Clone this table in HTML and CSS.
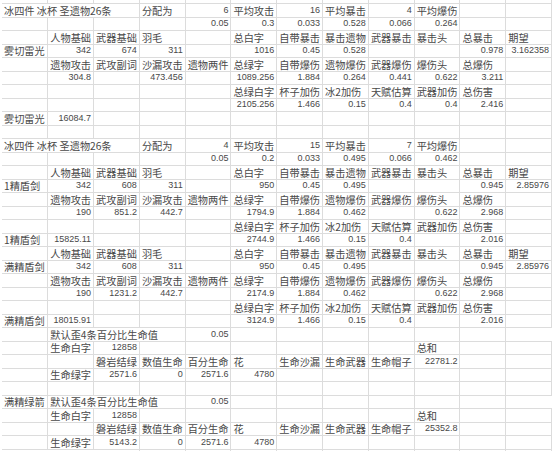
FILE: index.html
```html
<!DOCTYPE html>
<html lang="zh">
<head>
<meta charset="utf-8">
<title>sheet</title>
<link rel="stylesheet" href="styles.css">
</head>
<body>
<table class="sheet">
<colgroup><col><col><col><col><col><col><col><col><col><col><col><col></colgroup>
<tr class="stub"><td></td><td></td><td></td><td></td><td></td><td></td><td></td><td></td><td></td><td></td><td></td><td></td></tr>
<tr><td colspan="3">冰四件 冰杯 圣遗物26条</td><td>分配为</td><td class="n">6</td><td>平均攻击</td><td class="n">16</td><td>平均暴击</td><td class="n">4</td><td>平均爆伤</td><td></td><td></td></tr>
<tr><td></td><td></td><td></td><td></td><td class="n">0.05</td><td class="n">0.3</td><td class="n">0.033</td><td class="n">0.528</td><td class="n">0.066</td><td class="n">0.264</td><td></td><td></td></tr>
<tr><td></td><td>人物基础</td><td>武器基础</td><td>羽毛</td><td></td><td>总白字</td><td>自带暴击</td><td>暴击遗物</td><td>武器暴击</td><td>暴击头</td><td>总暴击</td><td>期望</td></tr>
<tr><td>雾切雷光</td><td class="n">342</td><td class="n">674</td><td class="n">311</td><td></td><td class="n">1016</td><td class="n">0.45</td><td class="n">0.528</td><td></td><td></td><td class="n">0.978</td><td class="n">3.162358</td></tr>
<tr><td></td><td>遗物攻击</td><td>武攻副词</td><td>沙漏攻击</td><td>遗物两件</td><td>总绿字</td><td>自带爆伤</td><td>遗物爆伤</td><td>武器爆伤</td><td>爆伤头</td><td>总爆伤</td><td></td></tr>
<tr><td></td><td class="n">304.8</td><td></td><td class="n">473.456</td><td></td><td class="n">1089.256</td><td class="n">1.884</td><td class="n">0.264</td><td class="n">0.441</td><td class="n">0.622</td><td class="n">3.211</td><td></td></tr>
<tr><td></td><td></td><td></td><td></td><td></td><td>总绿白字</td><td>杯子加伤</td><td>冰2加伤</td><td>天赋估算</td><td>武器加伤</td><td>总伤害</td><td></td></tr>
<tr><td></td><td></td><td></td><td></td><td></td><td class="n">2105.256</td><td class="n">1.466</td><td class="n">0.15</td><td class="n">0.4</td><td class="n">0.4</td><td class="n">2.416</td><td></td></tr>
<tr><td>雾切雷光</td><td class="n">16084.7</td><td></td><td></td><td></td><td></td><td></td><td></td><td></td><td></td><td></td><td></td></tr>
<tr><td></td><td></td><td></td><td></td><td></td><td></td><td></td><td></td><td></td><td></td><td></td><td></td></tr>
<tr><td colspan="3">冰四件 冰杯 圣遗物26条</td><td>分配为</td><td class="n">4</td><td>平均攻击</td><td class="n">15</td><td>平均暴击</td><td class="n">7</td><td>平均爆伤</td><td></td><td></td></tr>
<tr><td></td><td></td><td></td><td></td><td class="n">0.05</td><td class="n">0.2</td><td class="n">0.033</td><td class="n">0.495</td><td class="n">0.066</td><td class="n">0.462</td><td></td><td></td></tr>
<tr><td></td><td>人物基础</td><td>武器基础</td><td>羽毛</td><td></td><td>总白字</td><td>自带暴击</td><td>暴击遗物</td><td>武器暴击</td><td>暴击头</td><td>总暴击</td><td>期望</td></tr>
<tr><td>1精盾剑</td><td class="n">342</td><td class="n">608</td><td class="n">311</td><td></td><td class="n">950</td><td class="n">0.45</td><td class="n">0.495</td><td></td><td></td><td class="n">0.945</td><td class="n">2.85976</td></tr>
<tr><td></td><td>遗物攻击</td><td>武攻副词</td><td>沙漏攻击</td><td>遗物两件</td><td>总绿字</td><td>自带爆伤</td><td>遗物爆伤</td><td>武器爆伤</td><td>爆伤头</td><td>总爆伤</td><td></td></tr>
<tr><td></td><td class="n">190</td><td class="n">851.2</td><td class="n">442.7</td><td></td><td class="n">1794.9</td><td class="n">1.884</td><td class="n">0.462</td><td></td><td class="n">0.622</td><td class="n">2.968</td><td></td></tr>
<tr><td></td><td></td><td></td><td></td><td></td><td>总绿白字</td><td>杯子加伤</td><td>冰2加伤</td><td>天赋估算</td><td>武器加伤</td><td>总伤害</td><td></td></tr>
<tr><td>1精盾剑</td><td class="n">15825.11</td><td></td><td></td><td></td><td class="n">2744.9</td><td class="n">1.466</td><td class="n">0.15</td><td class="n">0.4</td><td></td><td class="n">2.016</td><td></td></tr>
<tr><td></td><td>人物基础</td><td>武器基础</td><td>羽毛</td><td></td><td>总白字</td><td>自带暴击</td><td>暴击遗物</td><td>武器暴击</td><td>暴击头</td><td>总暴击</td><td>期望</td></tr>
<tr><td>满精盾剑</td><td class="n">342</td><td class="n">608</td><td class="n">311</td><td></td><td class="n">950</td><td class="n">0.45</td><td class="n">0.495</td><td></td><td></td><td class="n">0.945</td><td class="n">2.85976</td></tr>
<tr><td></td><td>遗物攻击</td><td>武攻副词</td><td>沙漏攻击</td><td>遗物两件</td><td>总绿字</td><td>自带爆伤</td><td>遗物爆伤</td><td>武器爆伤</td><td>爆伤头</td><td>总爆伤</td><td></td></tr>
<tr><td></td><td class="n">190</td><td class="n">1231.2</td><td class="n">442.7</td><td></td><td class="n">2174.9</td><td class="n">1.884</td><td class="n">0.462</td><td></td><td class="n">0.622</td><td class="n">2.968</td><td></td></tr>
<tr><td></td><td></td><td></td><td></td><td></td><td>总绿白字</td><td>杯子加伤</td><td>冰2加伤</td><td>天赋估算</td><td>武器加伤</td><td>总伤害</td><td></td></tr>
<tr><td>满精盾剑</td><td class="n">18015.91</td><td></td><td></td><td></td><td class="n">3124.9</td><td class="n">1.466</td><td class="n">0.15</td><td class="n">0.4</td><td></td><td class="n">2.016</td><td></td></tr>
<tr><td></td><td colspan="3">默认歪4条百分比生命值</td><td class="n">0.05</td><td></td><td></td><td></td><td></td><td></td><td></td></tr>
<tr><td></td><td>生命白字</td><td class="n">12858</td><td></td><td></td><td></td><td></td><td></td><td></td><td>总和</td><td></td><td></td></tr>
<tr><td></td><td></td><td>磐岩结绿</td><td>数值生命</td><td>百分生命</td><td>花</td><td>生命沙漏</td><td>生命武器</td><td>生命帽子</td><td class="n">22781.2</td><td></td><td></td></tr>
<tr><td></td><td>生命绿字</td><td class="n">2571.6</td><td class="n">0</td><td class="n">2571.6</td><td class="n">4780</td><td></td><td></td><td></td><td></td><td></td><td></td></tr>
<tr><td></td><td></td><td></td><td></td><td></td><td></td><td></td><td></td><td></td><td></td><td></td><td></td></tr>
<tr><td>满精绿箭</td><td colspan="3">默认歪4条百分比生命值</td><td class="n">0.05</td><td></td><td></td><td></td><td></td><td></td><td></td></tr>
<tr><td></td><td>生命白字</td><td class="n">12858</td><td></td><td></td><td></td><td></td><td></td><td></td><td>总和</td><td></td><td></td></tr>
<tr><td></td><td></td><td>磐岩结绿</td><td>数值生命</td><td>百分生命</td><td>花</td><td>生命沙漏</td><td>生命武器</td><td>生命帽子</td><td class="n">25352.8</td><td></td><td></td></tr>
<tr><td></td><td>生命绿字</td><td class="n">5143.2</td><td class="n">0</td><td class="n">2571.6</td><td class="n">4780</td><td></td><td></td><td></td><td></td><td></td><td></td></tr>
<tr><td colspan="3">冰四件 冰杯 圣遗物26条</td><td>分配为</td><td class="n">4</td><td>平均攻击</td><td class="n">11</td><td>平均暴击</td><td class="n">10</td><td>平均爆伤</td><td></td><td></td></tr>
<tr><td></td><td></td><td></td><td></td><td></td><td></td><td></td><td></td><td></td><td></td><td></td><td></td></tr>
</table>
</body>
</html>
```

FILE: styles.css
```css
html, body {
  margin: 0;
  padding: 0;
  background: #ffffff;
  overflow: hidden;
}

.sheet {
  border-collapse: collapse;
  table-layout: fixed;
  width: 549.6px;
  margin-left: 2px;
  font-family: "Noto Sans CJK SC", "Noto Sans", sans-serif;
  font-size: 10.2px;
  color: #484848;
}

.sheet col {
  width: 45.8px;
}

.sheet td {
  border: 1px solid #dcdcdc;
  height: 12.5px;
  padding: 0 1px 0 2px;
  white-space: nowrap;
  overflow: visible;
  line-height: 11px;
  vertical-align: middle;
}

.sheet td:first-child {
  border-left: 0;
}

.sheet td.n {
  text-align: right;
  font-family: "Liberation Sans", Arial, sans-serif;
  font-size: 9px;
  padding-right: 2px;
}

.sheet .stub td {
  height: 3px;
  border-top: 0;
}
```
